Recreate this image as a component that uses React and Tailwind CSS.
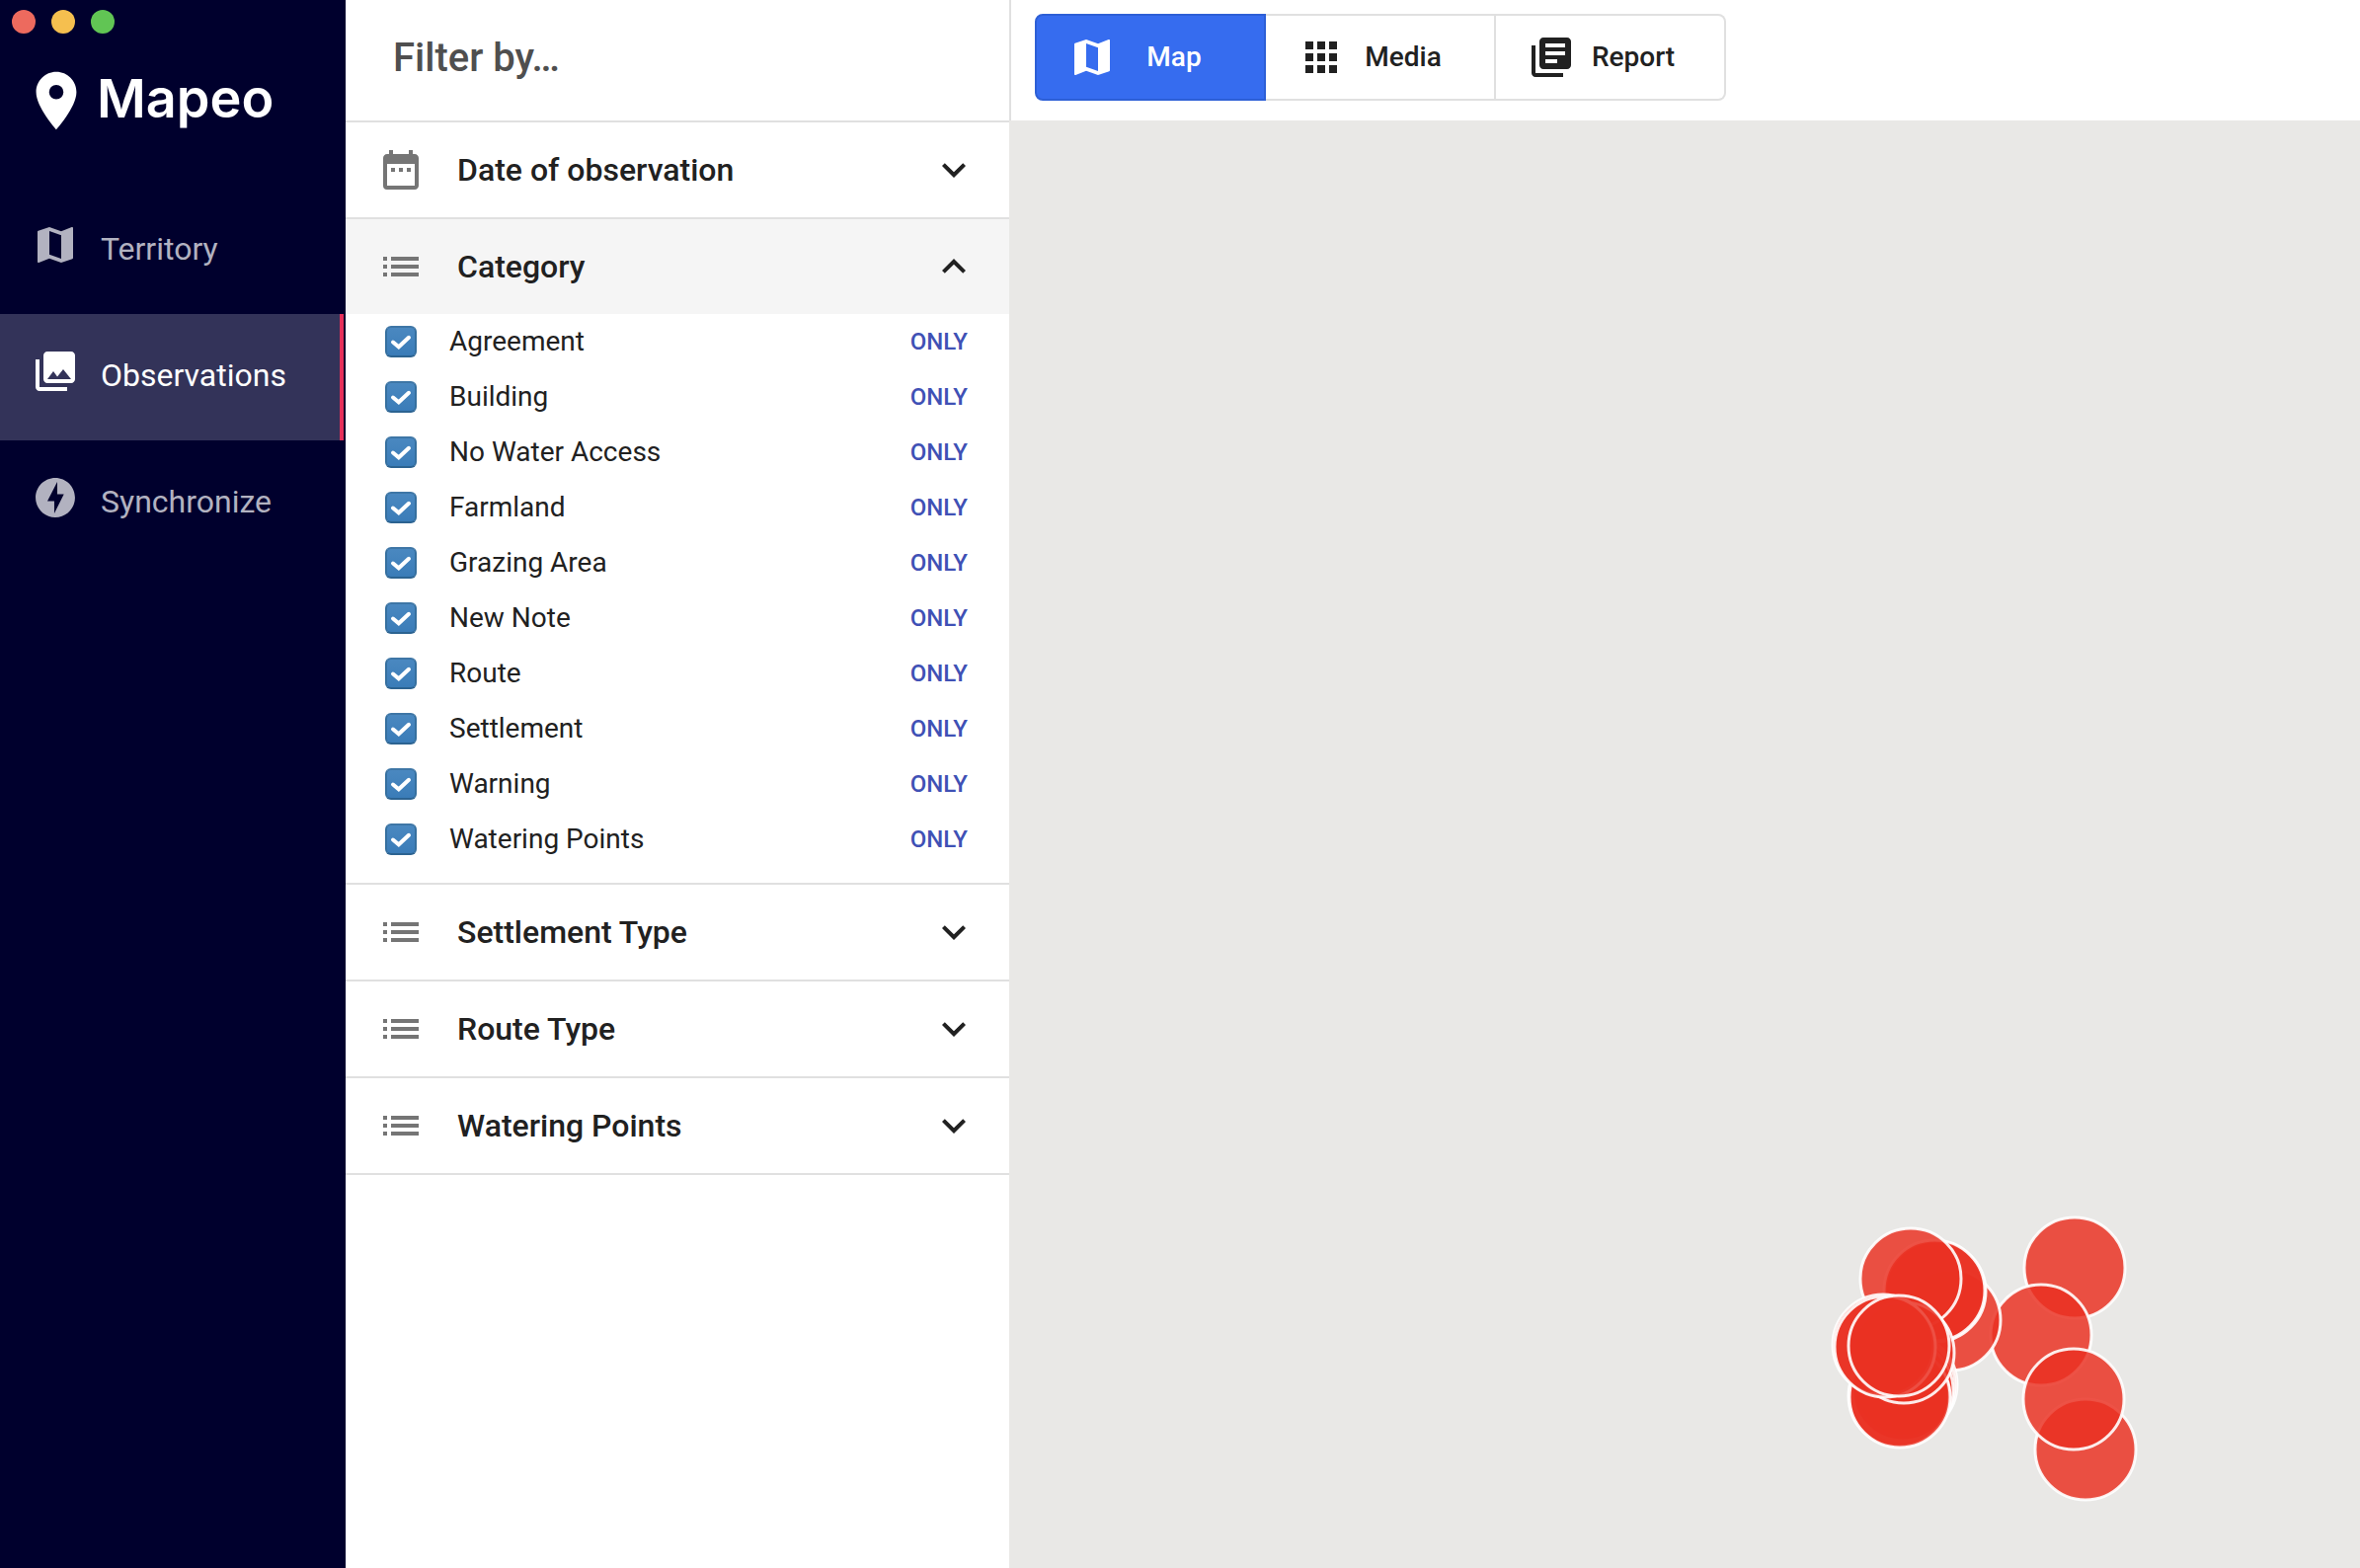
import {
  MdApps,
  MdDateRange,
  MdExpandLess,
  MdExpandMore,
  MdLibraryBooks,
  MdList,
  MdMap,
  MdOfflineBolt,
  MdPhotoLibrary,
  MdPlace,
} from "react-icons/md";

const navItems = [
  { label: "Territory", Icon: MdMap },
  { label: "Observations", Icon: MdPhotoLibrary, active: true },
  { label: "Synchronize", Icon: MdOfflineBolt },
];

const categories = [
  "Agreement",
  "Building",
  "No Water Access",
  "Farmland",
  "Grazing Area",
  "New Note",
  "Route",
  "Settlement",
  "Warning",
  "Watering Points",
];

const tabs = [
  { label: "Map", Icon: MdMap, active: true },
  { label: "Media", Icon: MdApps },
  { label: "Report", Icon: MdLibraryBooks },
];

// Marker centres on the map canvas, in drawing order.
const markers = [
  [261, 64],
  [227, 132],
  [272, 248],
  [260, 197],
  [135, 117],
  [120, 88],
  [119, 87],
  [95, 75],
  [91, 182],
  [89, 184],
  [87, 188],
  [83, 194],
  [84, 195],
  [88, 150],
  [67, 142],
  [69, 144],
  [83, 143],
];

function Sidebar() {
  return (
    <aside className="flex w-[350px] shrink-0 flex-col bg-[#00002d] pr-0.5">
      <div className="flex gap-4 px-3 pt-2.5">
        <span className="size-6 rounded-full bg-[#ed6a5e]" />
        <span className="size-6 rounded-full bg-[#f5bf4f]" />
        <span className="size-6 rounded-full bg-[#61c554]" />
      </div>
      <div className="mt-[30px] mb-[50px] flex h-[76px] items-center pl-[22px] text-white">
        <MdPlace size={70} />
        <span className="ml-1.5 pb-1 font-[Inter,sans-serif] text-[54px] leading-none font-semibold">Mapeo</span>
      </div>
      <nav>
        {navItems.map(({ label, Icon, active }) => (
          <a
            key={label}
            href="#"
            className={
              active
                ? "flex h-32 items-center border-r-4 border-[#e5305a] bg-[#333359] pl-8 text-white"
                : "flex h-32 items-center pl-8 text-[#b2b2c0]"
            }
          >
            <Icon size={48} className="mb-3" />
            <span className="mb-1 ml-[22px] text-[32px] leading-10">{label}</span>
          </a>
        ))}
      </nav>
    </aside>
  );
}

function FilterHeading({ label, Icon = MdList, open = false }) {
  const Chevron = open ? MdExpandLess : MdExpandMore;
  return (
    <h2>
      <button
        type="button"
        aria-expanded={open}
        className={
          open
            ? "flex h-24 w-full items-center bg-[#f5f5f5] px-8 text-[#212121]"
            : "flex h-24 w-full items-center px-8 text-[#212121]"
        }
      >
        <Icon size={48} className="text-[#757575]" />
        <span className="ml-[33px] text-[32px] leading-10 font-medium">{label}</span>
        <Chevron size={48} className="ml-auto" />
      </button>
    </h2>
  );
}

function CategoryRow({ label }) {
  return (
    <li className="flex h-14 items-center pr-[42px] pl-10">
      <label className="flex flex-1 items-center">
        <span className="grid size-8 place-items-center">
          <input
            type="checkbox"
            defaultChecked
            className="col-start-1 row-start-1 size-8 appearance-none rounded-md border-2 border-[#36709f] border-t-[#3e76a6] border-b-[#2c6391] bg-linear-to-b from-[#4a88c0] to-[#3a7cb8]"
          />
          <svg
            viewBox="0 0 32 32"
            className="pointer-events-none col-start-1 row-start-1 size-8"
            fill="none"
            stroke="white"
            strokeWidth="4"
            strokeLinecap="round"
            strokeLinejoin="miter"
          >
            <path d="M8 16.5 L13.8 21.3 L24 11.8" />
          </svg>
        </span>
        <span className="ml-[33px] text-[28px] leading-8 text-[#212121]">{label}</span>
      </label>
      <button type="button" className="text-2xl leading-8 font-medium text-[#3f51b5]">
        ONLY
      </button>
    </li>
  );
}

function FilterPanel() {
  return (
    <section className="flex w-[672px] shrink-0 flex-col bg-white">
      <header className="flex h-[124px] items-center border-b-2 border-[#e0e0e0] px-12 pb-1">
        <h1 className="text-[40px] leading-none font-medium text-[#4f4f4f]">Filter by…</h1>
      </header>
      <div className="divide-y-2 divide-[#e0e0e0] border-b-2 border-[#e0e0e0]">
        <FilterHeading label="Date of observation" Icon={MdDateRange} />
        <div>
          <FilterHeading label="Category" open />
          <ul className="pb-4">
            {categories.map((name) => (
              <CategoryRow key={name} label={name} />
            ))}
          </ul>
        </div>
        <FilterHeading label="Settlement Type" />
        <FilterHeading label="Route Type" />
        <FilterHeading label="Watering Points" />
      </div>
    </section>
  );
}

function MapView() {
  return (
    <main className="flex min-w-0 flex-1 flex-col">
      <header className="flex h-[122px] items-start border-l-2 border-[#e0e0e0] bg-white px-6 pt-3.5">
        <div className="flex h-[88px] text-[28px] font-medium">
          {tabs.map(({ label, Icon, active }) => (
            <button
              key={label}
              type="button"
              className={
                active
                  ? "flex w-[234px] items-center rounded-l-lg border-2 border-[#2d5fd6] bg-[#366cef] pl-8 text-white"
                  : "flex w-[233px] items-center border-y-2 border-r-2 border-[#e0e0e0] pl-8 text-[#212121] last:rounded-r-lg"
              }
            >
              <Icon size={48} />
              <span className="w-[118px] text-center">{label}</span>
            </button>
          ))}
        </div>
      </header>
      <div className="relative flex-1 overflow-hidden bg-[#e9e8e6]">
        <svg
          className="absolute top-[1098px] left-[818px] h-[310px] w-[340px]"
          viewBox="0 0 340 310"
          fill="#ea3122"
          fillOpacity="0.84"
          stroke="white"
          strokeOpacity="0.9"
          strokeWidth="3"
        >
          {markers.map(([x, y], i) => (
            <circle key={i} cx={x} cy={y} r="51" />
          ))}
        </svg>
      </div>
    </main>
  );
}

export default function App() {
  return (
    <div className="flex min-h-screen bg-white font-[Roboto,sans-serif]">
      <Sidebar />
      <FilterPanel />
      <MapView />
    </div>
  );
}
